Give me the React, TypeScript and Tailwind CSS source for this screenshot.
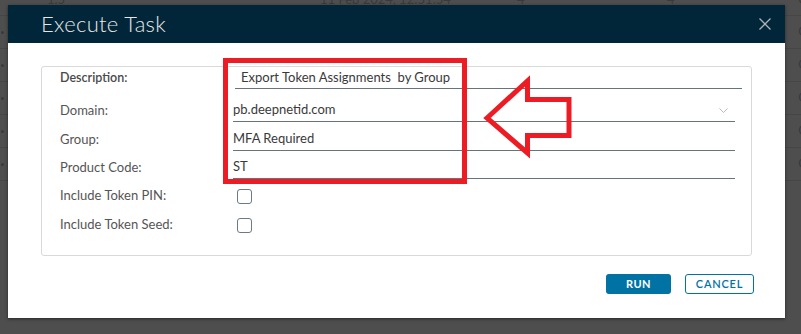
import React from "react";

const font = { fontFamily: "Lato, 'Open Sans', Arial, sans-serif" };

export default function App() {
  return (
    <div className="relative w-[801px] h-[334px] overflow-hidden bg-[#4e4e4e]" style={font}>
      {/* background page (dimmed) */}
      <div className="-mt-[15px] flex flex-col">
        <div className="h-[31px] border-b border-[#464646] flex items-center text-[13px] text-[#3a3a3a]">
          <span className="ml-[47px] w-[273px]">1.5</span>
          <span className="w-[197px]">11 Feb 2024, 12:51:54</span>
          <span className="w-[150px]">4</span>
          <span className="w-[120px]">4</span>
          <span className="ml-auto mr-[-6px]">C</span>
        </div>
        {[0, 1, 2, 3, 4].map((i) => (
          <div key={i} className="h-[33px] border-b border-[#464646] flex items-center text-[13px] text-[#3a3a3a]">
            <span className="ml-[1px] w-[3px] h-[3px] rounded-full bg-[#3a3a3a]" />
            <span className="ml-auto mr-[-6px]">C</span>
          </div>
        ))}
      </div>

      {/* modal */}
      <div className="absolute left-[8px] top-[5px] w-[777px] h-[313px] bg-white shadow-[0_1px_3px_rgba(0,0,0,0.5)] flex flex-col">
        <div className="h-[38px] bg-[#012639] flex items-center justify-between pl-[33px] pr-[14px]">
          <span className="text-[22px] font-light text-[#e6e6e6] leading-none tracking-[0.3px]">Execute Task</span>
          <svg width="12" height="12" viewBox="0 0 12 12">
            <path d="M0.5 0.5 L11.5 11.5 M11.5 0.5 L0.5 11.5" stroke="#a9b1b7" strokeWidth="1.3" fill="none" />
          </svg>
        </div>

        <div className="px-[33px] pt-[23px]">
          <div className="h-[190px] border border-[#d9d9d9] rounded-[3px] flex flex-col text-[13px]">
            {/* Description */}
            <div className="flex h-[22px] pr-[9px]">
              <div className="w-[193px] pl-[18px] flex items-center font-semibold text-[12.5px] text-[#4a4a4a]">Description:</div>
              <div className="flex-1 border-b border-[#66747c] flex items-center pl-[6px] text-[13px] text-[#3a3a3a]">
                Export Token Assignments&nbsp; by Group
              </div>
            </div>
            {/* Domain */}
            <div className="flex h-[23px] mt-[10px] pr-[16px]">
              <div className="w-[191px] pl-[18px] flex items-center text-[#555]">Domain:</div>
              <div className="flex-1 border-b border-[#66747c] flex items-center justify-between text-[13px] text-[#3a3a3a]">
                <span>pb.deepnetid.com</span>
                <svg width="9" height="6" viewBox="0 0 9 6" className="mr-[7px] mt-[1px]">
                  <path d="M0.5 0.5 L4.5 4.5 L8.5 0.5" stroke="#b8b8b8" strokeWidth="1" fill="none" />
                </svg>
              </div>
            </div>
            {/* Group */}
            <div className="flex h-[23px] mt-[6px] pr-[16px]">
              <div className="w-[191px] pl-[18px] flex items-center text-[#555]">Group:</div>
              <div className="flex-1 border-b border-[#66747c] flex items-center text-[13px] text-[#3a3a3a]">MFA Required</div>
            </div>
            {/* Product Code */}
            <div className="flex h-[23px] mt-[5px] pr-[16px]">
              <div className="w-[191px] pl-[18px] flex items-center text-[#555]">Product Code:</div>
              <div className="flex-1 border-b border-[#66747c] flex items-center text-[13px] text-[#3a3a3a]">ST</div>
            </div>
            {/* Include Token PIN */}
            <div className="flex h-[14px] mt-[10px]">
              <div className="w-[195px] pl-[18px] flex items-center text-[#555]">Include Token PIN:</div>
              <div className="w-[15px] h-[15px] border border-[#6b7a84] rounded-[3px]" />
            </div>
            {/* Include Token Seed */}
            <div className="flex h-[14px] mt-[15px]">
              <div className="w-[195px] pl-[18px] flex items-center text-[#555]">Include Token Seed:</div>
              <div className="w-[15px] h-[15px] border border-[#6b7a84] rounded-[3px]" />
            </div>
          </div>
        </div>

        <div className="flex justify-end gap-[14px] pr-[31px] mt-[18px]">
          <button className="w-[65px] h-[20px] bg-[#0072a3] rounded-[3px] text-white text-[11px] font-bold tracking-[0.5px] flex items-center justify-center">
            RUN
          </button>
          <button className="w-[69px] h-[20px] border border-[#0072a3] rounded-[3px] text-[#0072a3] text-[11px] font-semibold tracking-[0.8px] flex items-center justify-center">
            CANCEL
          </button>
        </div>
      </div>

      {/* red annotation box */}
      <div className="absolute left-[223px] top-[58px] w-[244px] h-[126px] border-[5px] border-[#ed1c24]" />

      {/* red annotation arrow */}
      <svg className="absolute left-[480px] top-[75px]" width="96" height="86" viewBox="0 0 96 86">
        <path
          d="M7 43 L47.5 6 L47.5 24.5 L89 24.5 L89 60.5 L47.5 60.5 L47.5 78 Z"
          stroke="#ed1c24"
          strokeWidth="5"
          fill="none"
          strokeLinejoin="miter"
        />
      </svg>
    </div>
  );
}
